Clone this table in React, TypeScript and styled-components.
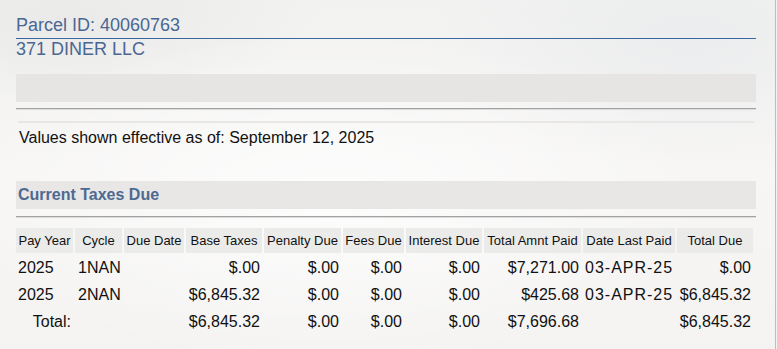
import styled, { createGlobalStyle } from "styled-components";

const GlobalStyle = createGlobalStyle`
  html, body {
    margin: 0;
    padding: 0;
  }
  body {
    font-family: "Liberation Sans", Arial, sans-serif;
    background: #f3f3f2;
  }
`;

const Page = styled.div`
  width: 776px;
  height: 349px;
  box-sizing: border-box;
  border-right: 1px solid #bdbdbd;
  padding: 15px 19px 0 16px;
  background:
    radial-gradient(ellipse 260px 120px at 690px 40px, rgba(230, 232, 235, 0.55), transparent),
    radial-gradient(ellipse 380px 170px at 330px 200px, rgba(255, 255, 255, 0.75), transparent),
    radial-gradient(ellipse 260px 90px at 60px 20px, rgba(225, 225, 225, 0.5), transparent),
    linear-gradient(180deg, #f2f2f1 0%, #f7f6f5 50%, #f4f3f2 100%);
  overflow: hidden;
`;

const ParcelId = styled.div`
  font-size: 18px;
  line-height: 21px;
  color: #4a6792;
  padding-bottom: 2px;
  border-bottom: 1px solid #3b67a1;
`;

const Owner = styled.div`
  font-size: 18px;
  line-height: 21px;
  color: #4a6792;
`;

const GrayBar = styled.div`
  margin-top: 14px;
  height: 28px;
  background: #e6e5e4;
`;

const Rule = styled.div<{ $gap: number }>`
  margin-top: ${(p) => p.$gap}px;
  height: 1px;
  background: #a2a2a2;
  box-shadow: 0 1px 0 #dcdcdc;
`;

const ThinRule = styled.div`
  margin: 12px 2px 0 2px;
  height: 2px;
  background: #e9e7e5;
`;

const Effective = styled.div`
  margin-top: 6px;
  padding-left: 3px;
  font-size: 16px;
  line-height: 18px;
  color: #111;
`;

const SectionBar = styled.div`
  margin-top: 34px;
  height: 28px;
  line-height: 28px;
  padding-left: 2px;
  background: #e8e7e6;
  font-size: 16px;
  font-weight: bold;
  color: #4d6a91;
`;

const Table = styled.table`
  margin-top: 9px;
  width: 741px;
  table-layout: fixed;
  border-collapse: separate;
  border-spacing: 2px;
  margin-left: -2px;
`;

const HeadCell = styled.th`
  background: #ebebea;
  font-weight: normal;
  font-size: 13px;
  line-height: 15px;
  height: 25px;
  padding: 0 1px;
  text-align: center;
  color: #111;
  white-space: nowrap;
  box-sizing: border-box;
`;

const Cell = styled.td<{ $align?: "left" | "right"; $wide?: boolean }>`
  font-size: 16px;
  line-height: 18px;
  height: 25px;
  padding: 0 2px;
  text-align: ${(p) => p.$align ?? "right"};
  letter-spacing: ${(p) => (p.$wide ? "1px" : "normal")};
  color: #111;
  white-space: nowrap;
  box-sizing: border-box;
`;

const widths = [57, 47, 60, 76, 77, 61, 76, 97, 92, 76];

const headers = [
  "Pay Year",
  "Cycle",
  "Due Date",
  "Base Taxes",
  "Penalty Due",
  "Fees Due",
  "Interest Due",
  "Total Amnt Paid",
  "Date Last Paid",
  "Total Due",
];

const rows = [
  ["2025", "1NAN", "", "$.00", "$.00", "$.00", "$.00", "$7,271.00", "03-APR-25", "$.00"],
  ["2025", "2NAN", "", "$6,845.32", "$.00", "$.00", "$.00", "$425.68", "03-APR-25", "$6,845.32"],
];

const total = ["Total:", "", "", "$6,845.32", "$.00", "$.00", "$.00", "$7,696.68", "", "$6,845.32"];

export default function App() {
  return (
    <>
      <GlobalStyle />
      <Page>
        <ParcelId>Parcel ID: 40060763</ParcelId>
        <Owner>371 DINER LLC</Owner>
        <GrayBar />
        <Rule $gap={6} />
        <ThinRule />
        <Effective>Values shown effective as of: September 12, 2025</Effective>
        <SectionBar>Current Taxes Due</SectionBar>
        <Rule $gap={7} />
        <Table>
          <colgroup>
            {widths.map((w, i) => (
              <col key={i} style={{ width: w }} />
            ))}
          </colgroup>
          <thead>
            <tr>
              {headers.map((h) => (
                <HeadCell key={h}>{h}</HeadCell>
              ))}
            </tr>
          </thead>
          <tbody>
            {rows.map((r, ri) => (
              <tr key={ri}>
                {r.map((v, i) => (
                  <Cell key={i} $align={i < 3 || i === 8 ? "left" : "right"} $wide={i === 8}>
                    {i === 1 ? <span style={{ paddingLeft: 1 }}>{v}</span> : v}
                  </Cell>
                ))}
              </tr>
            ))}
            <tr>
              {total.map((v, i) => (
                <Cell key={i} $align={i === 1 || i === 2 || i === 8 ? "left" : "right"}>
                  {v}
                </Cell>
              ))}
            </tr>
          </tbody>
        </Table>
      </Page>
    </>
  );
}
